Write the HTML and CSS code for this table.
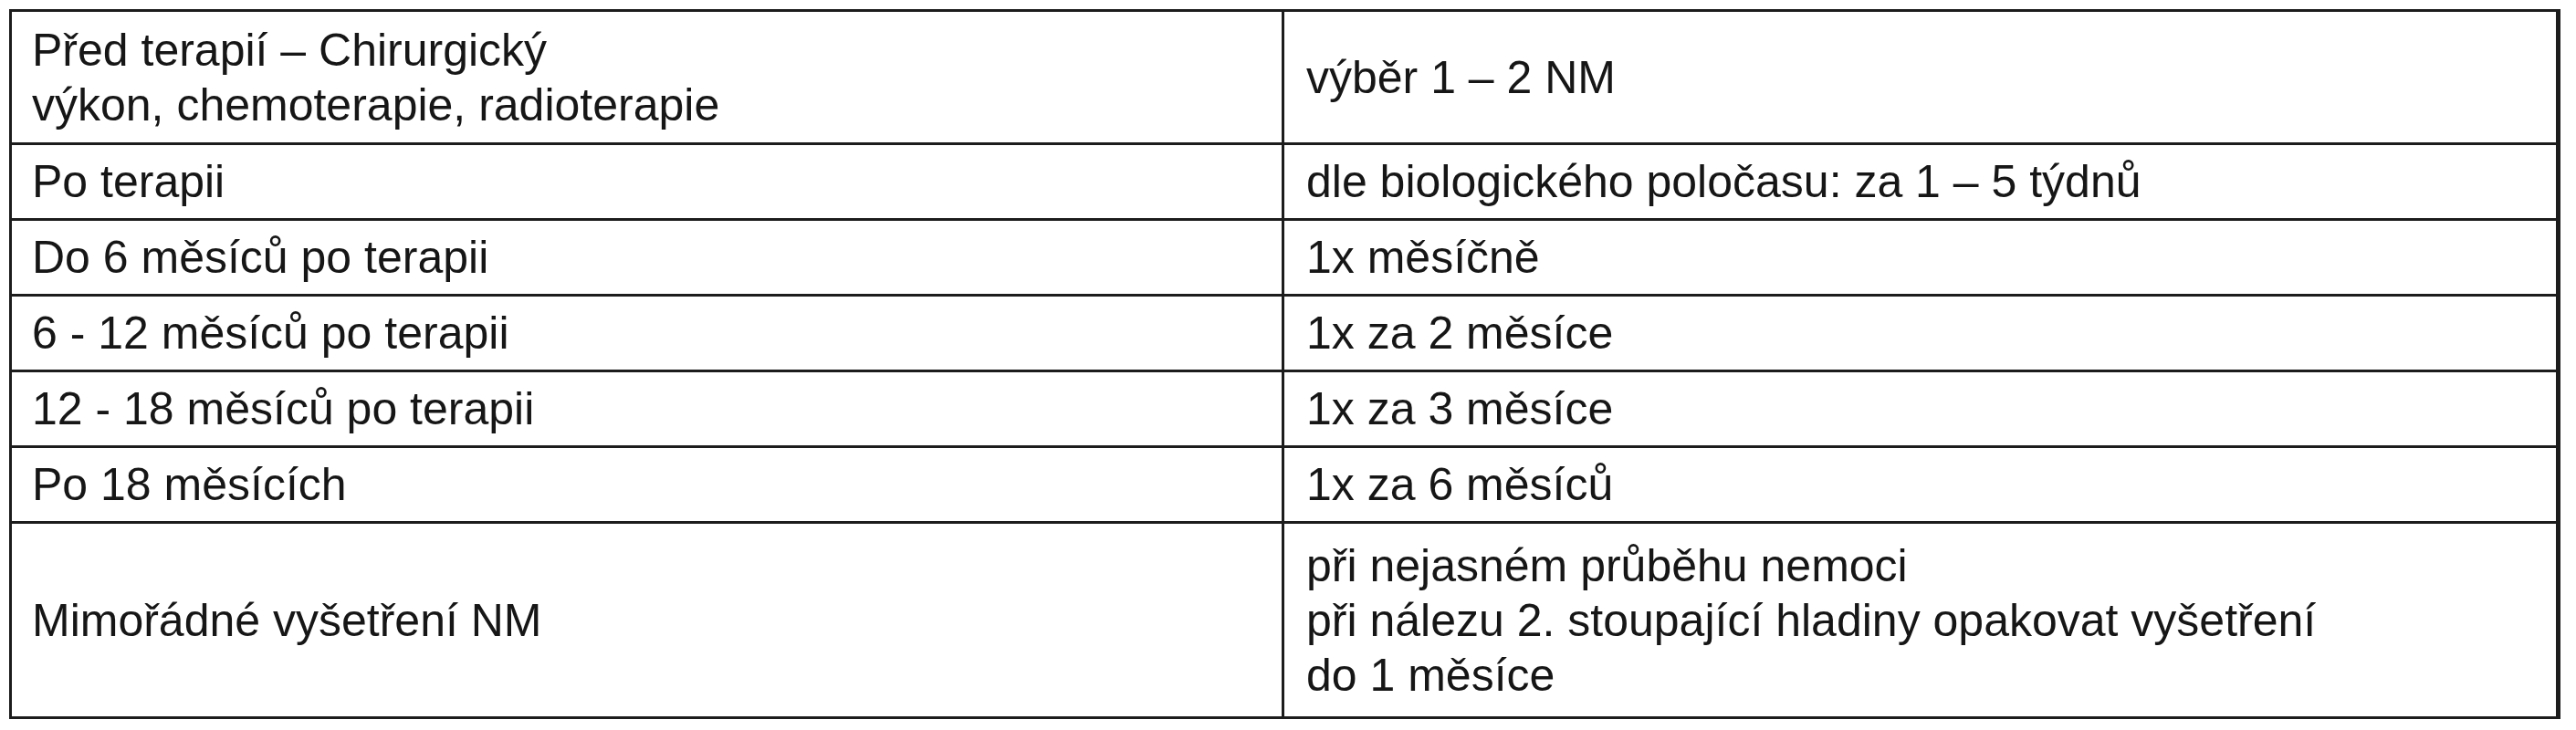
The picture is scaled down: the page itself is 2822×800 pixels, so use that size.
FILE: index.html
```html
<!DOCTYPE html>
<html lang="cs">
<head>
<meta charset="utf-8">
<title>Tabulka</title>
<link rel="stylesheet" href="styles.css">
</head>
<body>
<table class="schedule">
  <colgroup>
    <col class="col-a">
    <col class="col-b">
  </colgroup>
  <tbody>
    <tr class="row-two">
      <td class="cell-a">Před terapií – Chirurgický<br>výkon, chemoterapie, radioterapie</td>
      <td class="cell-b">výběr 1 – 2 NM</td>
    </tr>
    <tr>
      <td class="cell-a">Po terapii</td>
      <td class="cell-b">dle biologického poločasu: za 1 – 5 týdnů</td>
    </tr>
    <tr>
      <td class="cell-a">Do 6 měsíců po terapii</td>
      <td class="cell-b">1x měsíčně</td>
    </tr>
    <tr>
      <td class="cell-a">6 - 12 měsíců po terapii</td>
      <td class="cell-b">1x za 2 měsíce</td>
    </tr>
    <tr>
      <td class="cell-a">12 - 18 měsíců po terapii</td>
      <td class="cell-b">1x za 3 měsíce</td>
    </tr>
    <tr>
      <td class="cell-a">Po 18 měsících</td>
      <td class="cell-b">1x za 6 měsíců</td>
    </tr>
    <tr class="row-three">
      <td class="cell-a">Mimořádné vyšetření NM</td>
      <td class="cell-b">při nejasném průběhu nemoci<br>při nálezu 2. stoupající hladiny opakovat vyšetření<br>do 1 měsíce</td>
    </tr>
  </tbody>
</table>
</body>
</html>
```

FILE: styles.css
```css
html, body {
  margin: 0;
  padding: 0;
  background: #ffffff;
}

body {
  padding: 10px 0 0 10px;
  font-family: "Liberation Sans", Arial, sans-serif;
  color: #161616;
}

.schedule {
  border-collapse: collapse;
  width: 2795px;
  border: 3px solid #1c1c1c;
  border-right-width: 5px;
  font-size: 50px;
  line-height: 60px;
}

.col-a {
  width: 1394px;
}

.schedule td {
  border: 3px solid #1c1c1c;
  vertical-align: middle;
  padding: 10px 20px 10px 22px;
}

.schedule .cell-b {
  padding-left: 24px;
}

.row-two td {
  padding-top: 11.5px;
  padding-bottom: 11.5px;
}

.row-three td {
  padding-top: 15.5px;
  padding-bottom: 15.5px;
}
```
